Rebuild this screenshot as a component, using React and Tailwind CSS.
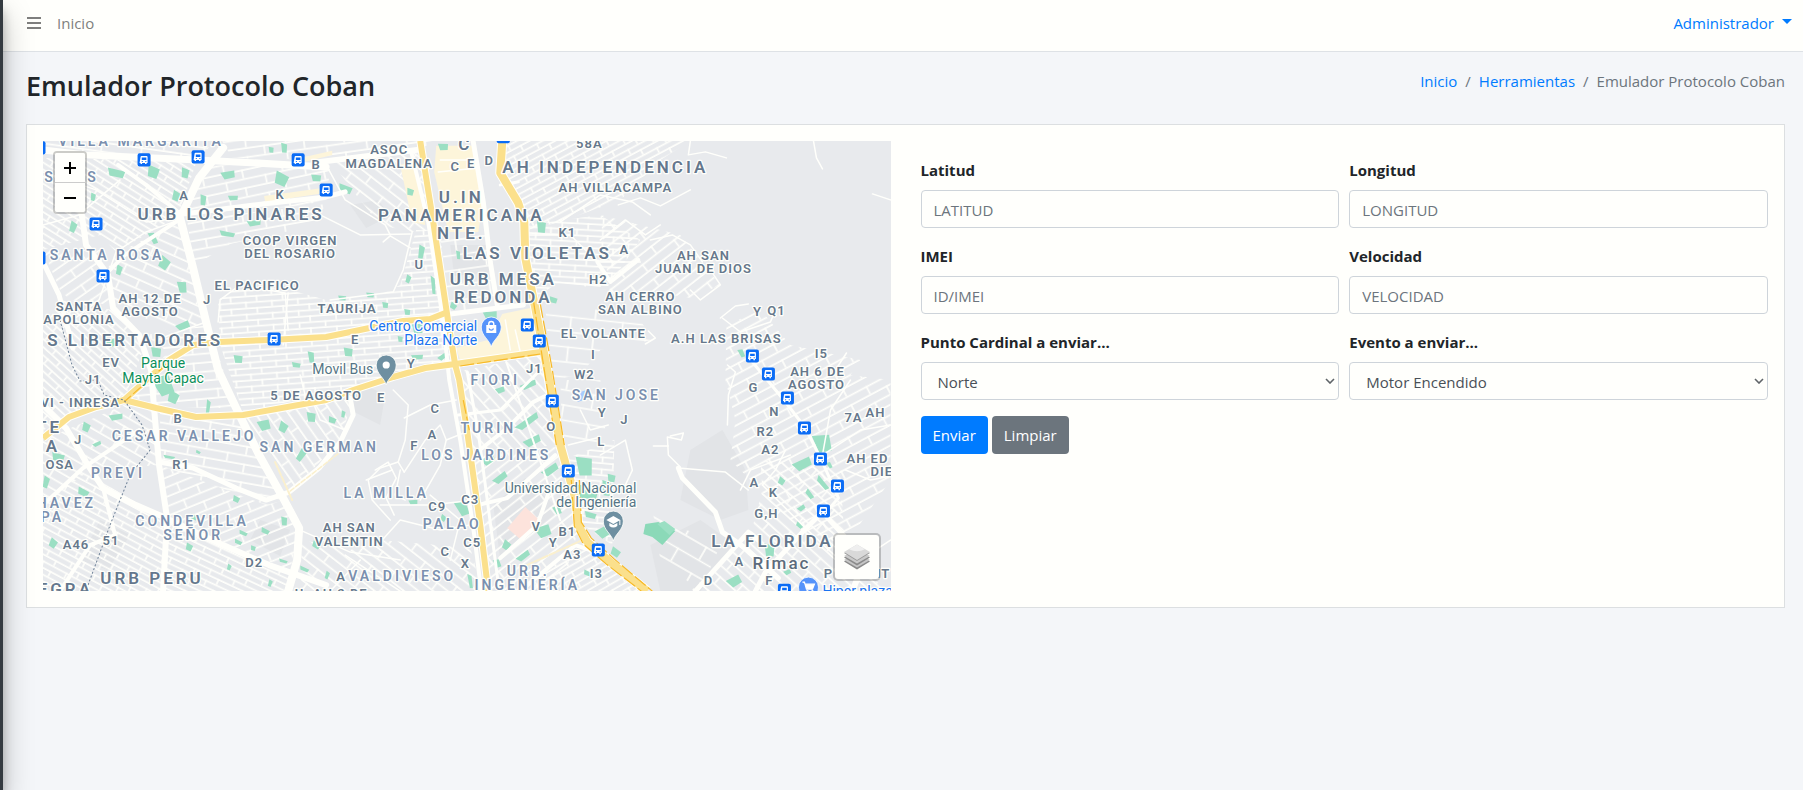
import { useState } from "react";

const ROAD = "#fffffb";

// Street blocks: outline, rotation of the street grid, and which grid density it uses.
const BLOCKS = [
  ["43,158 150,160 196,163 178,216 116,252 100,235 43,250", 32, "dense"],
  ["43,141 215,141 200,157 43,150", 8, "mid"],
  ["222,141 436,141 418,150 320,160 232,158", -8, "mid"],
  ["205,165 330,168 326,200 300,206 185,215 200,180", -12, "mid"],
  ["187,220 326,204 312,226 230,244 200,262 193,262", -10, "mid"],
  ["116,254 178,222 206,322 170,332 112,300 104,275", 24, "mid"],
  ["43,250 100,250 112,305 70,300 60,290", -35, "mid"],
  ["43,330 60,300 112,310 145,345 124,400 43,430", 42, "dense"],
  ["145,335 208,325 236,408 156,408 130,395 168,352", -5, "mid"],
  ["218,300 240,285 290,290 326,300 380,295 400,285 416,230 440,230 452,365 350,388 243,412 220,345", -4, "dense"],
  ["330,160 420,150 440,230 412,232 380,225 352,190", 38, "mid"],
  ["440,235 488,235 498,305 450,312", -8, "wide"],
  ["505,141 690,141 660,160 620,200 560,222 527,230 518,200 502,173", -28, "dense"],
  ["527,225 600,215 640,240 605,290 560,282 530,300", 3, "dense"],
  ["600,215 680,235 720,285 690,298 640,290 610,300", -38, "mid"],
  ["545,305 600,310 640,320 652,340 600,350 580,375 550,380", 6, "wide"],
  ["726,325 760,310 790,345 860,360 850,375 890,380 890,480 845,545 800,530 750,480 730,460 735,420 725,380", -28, "mid"],
  ["760,460 840,470 845,560 890,591 690,591 750,535 762,490", 42, "mid"],
  ["43,440 124,405 156,412 160,465 90,470 43,505", 30, "mid"],
  ["43,505 83,470 140,505 168,520 163,591 43,591", 28, "dense"],
  ["160,412 236,415 283,498 266,505 160,465", 10, "mid"],
  ["160,465 266,505 285,500 299,528 290,570 168,520", -22, "mid"],
  ["168,522 296,575 288,591 163,591", 25, "dense"],
  ["243,415 326,400 352,400 340,442 289,492", 55, "mid"],
  ["455,372 540,355 560,445 470,452", 48, "mid"],
  ["470,452 560,447 574,500 578,530 560,591 490,591 480,520", -38, "mid"],
  ["562,460 614,440 612,545 582,525", 5, "dense"],
  ["510,591 584,545 642,591", -30, "dense"],
  ["380,540 470,548 482,591 300,591 302,540 350,550", 38, "mid"],
  ["560,380 600,380 606,440 562,450", 10, "wide"],
  ["653,515 720,545 700,591 660,560", 30, "wide"],
];

const HILLS = [
  "350,205 378,200 390,216 366,228",
  "355,380 385,395 380,425 350,410",
  "690,450 722,430 745,470 748,510 720,520 680,500",
  "650,545 700,520 735,545 700,591 660,591",
  "450,245 486,245 492,272 454,276",
  "260,520 290,530 280,556 250,540",
  "493,505 525,478 560,510 500,560",
  "100,520 130,535 108,570 80,560",
];

const SAND = [
  "436,146 474,146 483,203 478,232 448,232 434,172",
  "502,314 530,308 540,350 460,361 456,348 488,340",
  "264,196 330,187 331,192 265,202",
  "400,165 415,160 425,225 412,222",
  "300,158 332,151 332,155 300,163",
];

const GREENS = [
  [116,173,18,8,10],[153,172,12,12,15],[185,173,8,10,10],[228,175,14,8,-15],[281,179,14,13,20],[316,178,10,7,0],
  [176,196,8,10,20],[203,200,6,11,5],[233,198,10,5,-5],[254,223,14,6,-10],[227,234,16,5,8],[153,238,6,13,-25],
  [164,263,11,12,30],[119,270,6,10,15],[182,287,9,12,-8],[73,227,7,11,20],[93,197,5,8,10],[183,326,14,8,-30],
  [114,342,16,8,-25],[238,359,9,8,0],[311,357,6,12,-5],[296,365,9,5,5],[284,148,6,10,0],[271,150,5,6,0],
  [156,352,10,10,0],[345,189,14,8,15],[410,192,7,7,10],[443,147,10,7,-5],[541,227,9,12,2],[421,252,6,14,10],
  [408,279,5,8,20],[433,285,4,19,-4],[458,255,4,9,-4],[342,298,8,5,0],[370,295,8,5,0],[385,305,6,6,0],
  [407,312,6,6,0],[490,315,14,8,-10],[553,300,8,6,10],[453,306,7,6,30],[417,327,11,13,-6],[348,352,9,9,0],
  [417,357,12,5,-6],[442,357,9,5,-40],[400,339,5,6,0],[163,385,18,22,-25],[173,397,11,12,20],[208,407,4,15,8],
  [116,417,14,6,-12],[86,427,8,9,20],[97,444,9,4,-30],[58,457,13,8,10],[83,492,12,7,22],[264,425,12,11,-20],
  [283,427,9,10,25],[311,417,9,10,0],[301,455,7,13,35],[236,499,7,6,20],[169,457,12,3,8],[198,452,5,3,25],
  [284,521,6,9,0],[265,531,9,5,22],[243,533,9,4,20],[253,548,5,5,10],[238,542,8,4,22],[189,547,7,7,20],
  [304,569,10,4,22],[283,561,9,3,15],[270,583,4,7,20],[229,567,4,6,20],[53,543,8,9,30],[46,482,6,12,15],
  [316,545,9,6,30],[194,517,7,5,20],[332,420,8,6,15],[343,414,4,7,10],[528,385,17,6,-25],[500,390,9,6,-25],
  [527,422,27,7,-38],[532,441,18,8,-30],[488,460,14,8,-35],[550,470,18,8,-38],[500,478,16,7,-42],[462,508,11,16,-25],
  [413,502,9,5,-10],[543,531,15,12,-25],[506,545,8,9,30],[523,556,15,6,-40],[497,563,6,9,-25],[584,466,16,20,-4],
  [587,492,22,14,5],[606,488,8,16,0],[603,532,14,11,-35],[590,515,12,6,10],[470,581,4,15,-8],[327,575,4,8,20],
  [587,573,8,5,20],[557,510,7,9,-25],[443,518,6,6,30],[822,443,17,19,-15],[802,464,19,10,-30],[781,481,7,7,30],
  [809,494,11,5,50],[822,483,17,5,48],[801,508,8,5,-40],[799,525,8,5,38],[769,550,10,13,0],[734,581,14,10,-35],
  [787,572,7,5,-30],[741,353,5,9,-25],[615,552,10,8,30],[829,465,4,7,-30],[611,478,8,8,5],
];

const LANES = [
  "43,172 96,190 146,222 179,218", "43,225 79,215 120,180", "60,330 99,300 116,252 146,232 179,220",
  "156,340 206,322", "218,322 220,300 240,285 285,293 288,330", "288,293 283,345", "320,215 360,235 410,234",
  "412,232 403,270 393,292 330,300", "326,165 345,200 385,225 390,235", "383,242 390,236 410,248",
  "527,235 570,235 597,262 640,262", "553,282 600,286", "618,205 640,198 660,206 690,190", "560,222 600,195 632,202 650,215",
  "600,240 625,220 645,235 660,225", "650,240 672,235 690,245 702,262", "690,290 700,300 720,285 710,270",
  "720,318 735,306 748,304", "722,318 740,332 770,322 775,310", "813,141 816,158 822,169", "872,194 890,200",
  "727,365 735,372 728,395 727,425", "690,141 688,155 705,152 726,158", "648,331 655,338 645,344",
  "393,390 408,405 405,440 398,462 404,472", "404,472 425,440 440,425 446,440 440,465 420,500", "404,418 430,405 456,400",
  "446,440 466,432", "398,462 380,468 368,480 372,500 390,520", "375,470 388,462 396,478 386,498 394,515", "380,505 430,505 475,500",
  "366,480 392,470", "430,495 460,520 450,560", "382,540 400,520 440,530 470,525",
  "653,446 668,446", "680,467 668,455 667,437 681,440 683,433 670,436", "678,468 725,472 748,490",
  "740,490 750,470 790,455", "762,485 775,470 785,450", "762,485 805,528 852,572", "850,380 830,410 822,455 860,430 890,425",
  "835,370 846,353", "845,470 870,480 890,476", "860,560 890,540", "600,455 625,440 632,470 625,485",
  "580,410 590,430 608,425", "568,445 600,437", "310,395 320,420 345,430", "300,375 305,395",
  "360,560 330,591", "345,555 400,591", "300,530 350,552 400,560", "405,500 395,495 400,470",
];

const AVENUES = [
  ["43,150 86,155 198,160 236,162 326,167", 7], ["223,148 199,178 183,212", 8],
  ["179,214 193,268 206,322 218,370 236,408 259,455 283,498 299,528 297,560 288,591", 8],
  ["183,214 254,205 326,197 345,192", 5], ["79,195 86,245 108,275 113,308 139,335 151,370 154,408 159,465 167,518 163,591", 6],
  ["43,262 59,295 73,348", 5], ["43,405 66,428 86,462 103,488 136,505 166,518 223,545 269,565 326,585", 6],
  ["43,505 83,468 139,430", 4], ["159,462 193,468 236,488 266,500 289,492 319,468 340,442 353,415 350,398", 5],
  ["473,142 483,202 490,262 497,305", 5], ["450,314 523,305", 5], ["320,162 417,150", 6],
  ["118,165 146,185 178,212", 4], ["105,275 125,255 179,220", 4], ["60,591 90,545 115,535 103,488", 4],
  ["477,505 507,498 533,475 555,455", 4], ["477,452 507,428 533,402 553,392", 4], ["500,558 537,525 550,488", 4],
  ["458,415 500,410 540,370", 3], ["678,468 682,478 715,512 722,532 745,548 778,578", 5],
  ["695,591 748,532 758,540", 5], ["852,545 822,512 802,532 765,572 755,591", 5], ["752,362 785,402 805,428 822,462 838,498 823,515", 3],
  ["597,262 610,282 638,260", 4], ["500,185 518,182", 3], ["506,362 560,520", 2], ["411,152 428,222 443,322 449,380 460,440 474,535 481,591", 4],
  ["467,372 478,432 491,530 499,591", 3], ["845,540 860,570 852,591", 6], ["520,591 575,545 590,550", 4],
];

const HIGHWAYS = [
  ["420,141 433,222 448,322 455,365 459,380 467,432 480,525 488,591", 6],
  ["219,342 270,340 326,337 403,321 430,319 445,313", 6],
  ["219,342 193,345 169,360 124,400", 6],
  ["43,438 69,417 96,407 124,400 156,408 196,417 243,415 326,400 353,390 393,377 425,368 455,364 540,352", 6],
  ["502,141 500,173 518,203 524,222 525,258 535,308 547,370 560,445 575,498 578,525 587,542 610,562 647,591", 8],
];

const HIGHWAY_EDGES = ["533,300 544,370 556,445", "540,304 552,370 564,445", "571,480 574,526 583,544 606,564 641,591",
  "579,480 581,522 591,538 614,559 652,591", "460,366 540,354", "169,362 124,402", "463,400 469,430"];

// Label groups share one type style; each entry is text, x, baseline y and optional anchor.
const AREAS = [
  ["URB LOS PINARES",231,220],["S LIBERTADORES",223,346,"end"],["AH INDEPENDENCIA",605,173],["U.IN",461,203],
  ["PANAMERICANA",461,221],["NTE.",461,239],["LAS VIOLETAS",537,259],["URB MESA",503,285],["REDONDA",503,303],
  ["TE",62,433,"end"],["A",60,452,"end"],["URB PERU",152,584],["EGRA",93,595,"end"],["LA FLORIDA",772,547],["C",465,150],
];
const CITIES = [["Rímac",781,569]];
const PLACES = [
  ["A",184,200],["K",280,199],["B",316,169],["COOP VIRGEN",290,245],["DEL ROSARIO",290,258],["EL PACIFICO",257,290],
  ["J",207,304],["AH 12 DE",150,303],["AGOSTO",150,316],["SANTA",79,311],["APOLONIA",79,324],["TAURIJA",347,313],
  ["EV",111,367],["ASOC",389,154],["MAGDALENA",389,168],["C",455,171],["E",471,168],["D",489,165],["58A",589,148],
  ["AH VILLACAMPA",615,192],["U",419,269],["K1",567,237],["A",624,254],["H2",598,284],["EL VOLANTE",603,338],
  ["AH CERRO",640,301],["SAN ALBINO",640,314],["AH SAN",703,260],["JUAN DE DIOS",703,273],["Y",757,316],["Q1",776,315],
  ["A.H LAS BRISAS",726,343],["I5",821,358],["AH 6 DE",817,376],["AGOSTO",816,389],["J1",534,373],["I",593,359],
  ["E",355,344],["Y",411,368],["J1",93,384],["VI - INRESA",120,407,"end"],["5 DE AGOSTO",316,400],["B",178,423],
  ["J",78,444],["OSA",74,469,"end"],["R1",181,469],["A46",76,549],["51",111,545],["D2",254,567],["W2",584,379],
  ["C",435,413],["A",432,439],["F",414,450],["E",381,402],["O",551,431],["Y",602,417],["L",601,446],["J",624,424],
  ["C9",437,511],["C3",470,504],["AH SAN",349,532],["VALENTIN",349,546],["C5",472,547],["C",445,556],["X",465,568],
  ["V",536,531],["Y",553,547],["B1",567,536],["A3",572,559],["I3",596,578],["A",341,581],["G",753,392],["N",774,416],
  ["R2",765,436],["A2",770,454],["7A",853,422],["AH",875,417],["AH ED",846,463,"start"],["DIE",870,476,"start"],
  ["A",754,487],["K",773,497],["G,H",766,518],["A",739,566],["F",769,585],["D",708,585],["P",828,578],["IT",883,578],
  ["U. AH 2 DE",331,598],
];
const DISTRICTS = [
  ["VILLA MARGARITA",141,146],["S",50,182],["S",93,182],["SANTA ROSA",107,260],["CESAR VALLEJO",184,441],["SAN GERMAN",319,452],
  ["PREVI",118,478],["HAVEZ",96,508,"end"],["PA",64,522,"end"],["CONDEVILLA",192,526],["SEÑOR",193,540],["FIORI",495,385],
  ["TURIN",488,433],["LOS JARDINES",486,460],["SAN JOSE",616,400],["LA MILLA",386,498],["PALAO",452,529],
  ["VALDIVIESO",402,581],["URB.",528,576],["INGENIERÍA",527,590],
];
const SHOPS = [["Centro Comercial",477,331,"end"],["Plaza Norte",477,345,"end"],["Hiper plaza",822,596,"start"]];
const PARKS = [["Parque",163,368],["Mayta Capac",163,383]];
const POIS = [["Movil Bus",373,374,"end"],["Universidad Nacional",636,493,"end"],["de Ingeniería",636,507,"end"]];

const STOPS = [
  [144,160],[198,157],[298,160],[326,190],[96,224],[103,276],[39,148],[39,258],[274,339],[503,137],[527,325],[539,341],
  [752,356],[768,374],[787,398],[804,428],[820,459],[837,486],[823,511],[784,590],[552,401],[568,471],[598,550],
];

function Labels({ items, className }) {
  return (
    <g className={className}>
      {items.map(([text, x, y, anchor], i) => (
        <text key={i} x={x} y={y} textAnchor={anchor || "middle"}>{text}</text>
      ))}
    </g>
  );
}

function Pin({ x, y, color, children }) {
  return (
    <g transform={`translate(${x} ${y})`}>
      <path d="M0 20C-1.5 13-10 9-10 0a10 10 0 0 1 20 0C10 9 1.5 13 0 20Z" fill={color} stroke={ROAD} strokeWidth="0.8" />
      {children}
    </g>
  );
}

function Grid({ id, w, h }) {
  return BLOCKS.map(([, angle, kind], i) =>
    kind === id ? (
      <pattern key={i} id={`streets-${i}`} width={w * 2} height={h * 2} patternUnits="userSpaceOnUse" patternTransform={`rotate(${angle})`}>
        <path d={`M0 1H${w * 2}M0 ${h + 1}H${w * 2}M1 0V${h}M${w + 3} ${h}V${h * 2}`} stroke={ROAD} strokeWidth="1.6" fill="none" />
      </pattern>
    ) : null
  );
}

function CityMap() {
  return (
    <svg viewBox="43 141 847 450" preserveAspectRatio="xMidYMid slice" className="block h-full w-full bg-[#e8eaed]" role="img" aria-label="Mapa">
      <defs>
        <Grid id="dense" w={13} h={6} />
        <Grid id="mid" w={20} h={9} />
        <Grid id="wide" w={26} h={15} />
      </defs>
      {HILLS.map((p) => <polygon key={p} points={p} fill="#e2e4e7" />)}
      {BLOCKS.map(([p], i) => <polygon key={i} points={p} fill={`url(#streets-${i})`} />)}
      {SAND.map((p) => <polygon key={p} points={p} fill="#fdf5da" />)}
      <g fill="#9bdfc3">
        {GREENS.map(([x, y, w, h, r], i) => (
          <polygon key={i} points={`${-w / 2},${-h / 2} ${w / 2},${-h / 3} ${w / 2.4},${h / 2} ${-w / 3},${h / 2.2}`} transform={`translate(${x} ${y}) rotate(${r})`} />
        ))}
        <path d="M645 524l13-2 17 9-13 14-10-8-9-3z" fill="#8bd9b8" />
        <path d="M657 524l7-3 11 8-6 6z" />
      </g>
      <path d="M525 507l13 12-17 21-14-12z" fill="#fde3dc" />
      <path d="M580 392l6-2-2 10-7 2z" fill="#a6cbfb" />
      <g fill="none" stroke={ROAD} strokeLinejoin="round" strokeLinecap="round">
        <path d="M440 160H472M438 172L478 168M505 320L510 350M520 352L515 330" strokeWidth="1.5" />
        {LANES.map((p) => <polyline key={p} points={p} strokeWidth="1.5" />)}
        {AVENUES.map(([p, w]) => <polyline key={p} points={p} strokeWidth={w} />)}
        <path d="M290 491L340 452" stroke="#fbf0cd" strokeWidth="1.5" strokeDasharray="5 2" />
        <path d="M275 462L292 500M520 568L582 540" stroke="#fbf0cd" strokeWidth="2" strokeDasharray="6 2" />
      </g>
      <g fill="none" strokeLinejoin="round">
        {HIGHWAYS.map(([p, w]) => <polyline key={p} points={p} strokeWidth={w + 2} stroke={ROAD} />)}
        {HIGHWAYS.map(([p, w]) => <polyline key={p} points={p} strokeWidth={w} stroke="#fbe08c" />)}
        {HIGHWAY_EDGES.map((p) => <polyline key={p} points={p} strokeWidth="1.2" stroke="#f7b928" strokeDasharray="14 3" />)}
        <path d="M60 320L72 365L80 381L98 380L104 395L124 400L142 425L150 450L130 475L110 525L88 585" stroke="#6f8298" strokeDasharray="2 2" />
      </g>
      {STOPS.map(([x, y], i) => (
        <g key={i} transform={`translate(${x} ${y})`}>
          <rect x="-6.5" y="-6.5" width="13" height="13" rx="2" fill="#0b6cf5" />
          <path d="M-3.5-3q0-1 1-1h5q1 0 1 1v6h-1v1.2h-1.5v-1.2h-3v1.2h-1.5v-1.2h-1z" fill="#fff" />
          <path d="M-2.3-2.3h4.6v2.3h-4.6zM-2.3 1.2h1v1h-1zM1.3 1.2h1v1h-1z" fill="#0b6cf5" />
        </g>
      ))}
      <g className="[font-family:Roboto,sans-serif]" stroke="#fffffb" strokeWidth="2.5" strokeLinejoin="round" paintOrder="stroke">
        <Labels items={DISTRICTS} className="fill-[#7b90af] text-[14px] font-semibold tracking-[3px]" />
        <Labels items={PLACES} className="fill-[#66788c] text-[13px] font-semibold tracking-[1px]" />
        <Labels items={AREAS} className="fill-[#64778d] text-[17px] font-semibold tracking-[3px]" />
        <Labels items={CITIES} className="fill-[#5c6b7c] text-[17px] font-medium tracking-[2px]" />
        <Labels items={PARKS} className="fill-[#0b8f5b] text-[14px]" />
        <Labels items={SHOPS} className="fill-[#1a73f0] text-[14px]" />
        <Labels items={POIS} className="fill-[#557587] text-[14px]" />
      </g>
      <Pin x={491} y={327} color="#5593fa">
        <path d="M-5-2H5V6H-5z" fill="#fff" />
        <path d="M-2.5-2v-1a2.5 2.5 0 0 1 5 0v1" fill="none" stroke="#fff" strokeWidth="1.4" />
        <path d="M-2.2 1.5a2.3 2.3 0 0 0 4.4 0" fill="none" stroke="#5593fa" strokeWidth="1.2" />
      </Pin>
      <Pin x={386} y={365} color="#6e8fa1"><circle r="3.6" fill="#fff" /></Pin>
      <Pin x={613} y={521} color="#6e8fa1">
        <path d="M-7-1L0-5L7-1L0 3zM-4 2v3q4 3 8 0V2L0 4z" fill="#fff" /><path d="M6.5-1v5" stroke="#fff" />
      </Pin>
      <Pin x={808} y={587} color="#5593fa">
        <path d="M-6-5h2l2 7h6l2-5h-9" fill="#fff" stroke="#fff" strokeWidth="1.2" /><circle cx="-1" cy="4" r="1.2" fill="#fff" /><circle cx="4" cy="4" r="1.2" fill="#fff" />
      </Pin>
    </svg>
  );
}

function LayersIcon() {
  return (
    <svg viewBox="0 0 26 26" className="h-[26px] w-[26px]" aria-hidden="true">
      <path d="M0 17.5L13 10l13 7.5L13 25.5z" fill="#8b8b8b" />
      <path d="M0 16L13 8.500l13 7.500L13 23.500z" fill="#c6c6c6" />
      <path d="M0 13.500L13 6l13 7.500L13 21.500z" fill="#8b8b8b" />
      <path d="M0 12L13 5l13 7L13 19.500z" fill="#c9c9c9" />
      <path d="M0 9L13 1l13 8L13 17z" fill="#9a9a9a" />
      <path d="M0 8L13 .5 26 8l-13 8z" fill="#d9d9d9" />
      <path d="M5 5.200L13 .5l8 4.700q-8 4-16 0z" fill="#efefef" />
    </svg>
  );
}

const fieldClass = "block h-[38px] w-full rounded border border-[#ced4da] bg-[#fffffc] pt-0.5 text-[15px] placeholder:text-[#6c757d]";

function Field({ id, label, children }) {
  return (
    <div>
      <label htmlFor={id} className="mb-2 block text-[15px] leading-6 font-bold">{label}</label>
      {children}
    </div>
  );
}

function TextField({ id, label, placeholder }) {
  return (
    <Field id={id} label={label}>
      <input id={id} type="text" placeholder={placeholder} className={`${fieldClass} px-3 text-[#495057]`} />
    </Field>
  );
}

function SelectField({ id, label, options }) {
  return (
    <Field id={id} label={label}>
      <div className="relative">
        <select id={id} className={`${fieldClass} appearance-none pr-6 pl-4 text-[#495057]`}>
          {options.map((o) => <option key={o}>{o}</option>)}
        </select>
        <svg viewBox="0 0 10 6" className="pointer-events-none absolute top-4 right-1 h-[6px] w-[10px]" fill="none" stroke="#5f6468" strokeWidth="1.6" aria-hidden="true">
          <path d="M1 1l4 4 4-4" />
        </svg>
      </div>
    </Field>
  );
}

export default function App() {
  const [resetKey, setResetKey] = useState(0);
  return (
    <div className="flex min-h-screen bg-[#f4f6f9] text-[15px] leading-6 text-[#212529] [font-family:'Segoe_UI','Open_Sans',sans-serif]">
      <aside className="z-10 -ml-[247px] w-[250px] shrink-0 bg-[#343a40] shadow-[0_14px_28px_rgba(0,0,0,0.25),0_10px_10px_rgba(0,0,0,0.22)]" />
      <div className="min-w-0 flex-1">
        <header className="flex h-[52px] items-center justify-between border-b border-[#dee2e6] bg-[#fffffc] pr-[11px] pb-1.5 pl-6">
          <nav className="flex items-center gap-4">
            <button type="button" aria-label="Menú" className="text-[#7f7f7e]">
              <svg viewBox="0 0 14 12" className="h-3 w-[14px]" fill="currentColor" aria-hidden="true">
                <path d="M0 0h14v2H0zM0 5h14v2H0zM0 10h14v2H0z" />
              </svg>
            </button>
            <a href="#inicio" className="text-[#7f7f7e]">Inicio</a>
          </nav>
          <button type="button" className="flex items-center gap-2 text-[#007bff]">
            Administrador
            <svg viewBox="0 0 10 5" className="mb-0.5 h-[5px] w-[10px]" fill="currentColor" aria-hidden="true"><path d="M0 0h10L5 5z" /></svg>
          </button>
        </header>
        <main className="pr-[18px] pl-[23px]">
          <div className="flex items-start justify-between pt-[17px] pb-[22px]">
            <h1 className="text-[27px] leading-[33px] font-semibold">Emulador Protocolo Coban</h1>
            <nav aria-label="Ruta" className="flex gap-2 text-[#6c757d]">
              <a href="#inicio" className="text-[#007bff]">Inicio</a>
              <span>/</span>
              <a href="#herramientas" className="text-[#007bff]">Herramientas</a>
              <span>/</span>
              <span>Emulador Protocolo Coban</span>
            </nav>
          </div>
          <section className="grid grid-cols-2 gap-[30px] border border-[#dcdfe1] bg-[#fffffc] p-4">
            <div className="relative h-[450px] overflow-hidden">
              <CityMap />
              <div className="absolute top-[10px] left-[10px] flex w-[34px] flex-col rounded border-2 border-black/20 bg-clip-padding text-black">
                <button type="button" aria-label="Acercar" className="flex h-[30px] items-center justify-center rounded-t-[2px] border-b border-[#ccc] bg-[#fffffc]">
                  <svg viewBox="0 0 12 12" className="h-3 w-3" aria-hidden="true"><path d="M6 0v12M0 6h12" stroke="currentColor" strokeWidth="2" /></svg>
                </button>
                <button type="button" aria-label="Alejar" className="flex h-[29px] items-center justify-center rounded-b-[2px] bg-[#fffffc]">
                  <svg viewBox="0 0 12 12" className="h-3 w-3" aria-hidden="true"><path d="M0 6h12" stroke="currentColor" strokeWidth="2" /></svg>
                </button>
              </div>
              <button type="button" aria-label="Capas" className="absolute right-[10px] bottom-[10px] flex h-12 w-12 items-center justify-center rounded-[5px] border-2 border-black/20 bg-[#fffffc] bg-clip-padding">
                <LayersIcon />
              </button>
            </div>
            <form key={resetKey} className="pt-[17px]" onSubmit={(e) => e.preventDefault()}>
              <div className="grid grid-cols-2 gap-x-[10px] gap-y-4">
                <TextField id="latitud" label="Latitud" placeholder="LATITUD" />
                <TextField id="longitud" label="Longitud" placeholder="LONGITUD" />
                <TextField id="imei" label="IMEI" placeholder="ID/IMEI" />
                <TextField id="velocidad" label="Velocidad" placeholder="VELOCIDAD" />
                <SelectField id="punto" label="Punto Cardinal a enviar..." options={["Norte", "Sur", "Este", "Oeste"]} />
                <SelectField id="evento" label="Evento a enviar..." options={["Motor Encendido", "Motor Apagado"]} />
              </div>
              <div className="mt-4 flex gap-1">
                <button type="submit" className="h-[38px] rounded bg-[#007bff] px-3 text-white">Enviar</button>
                <button type="button" onClick={() => setResetKey(resetKey + 1)} className="h-[38px] rounded bg-[#6c757d] px-3 text-white">Limpiar</button>
              </div>
            </form>
          </section>
        </main>
      </div>
    </div>
  );
}
